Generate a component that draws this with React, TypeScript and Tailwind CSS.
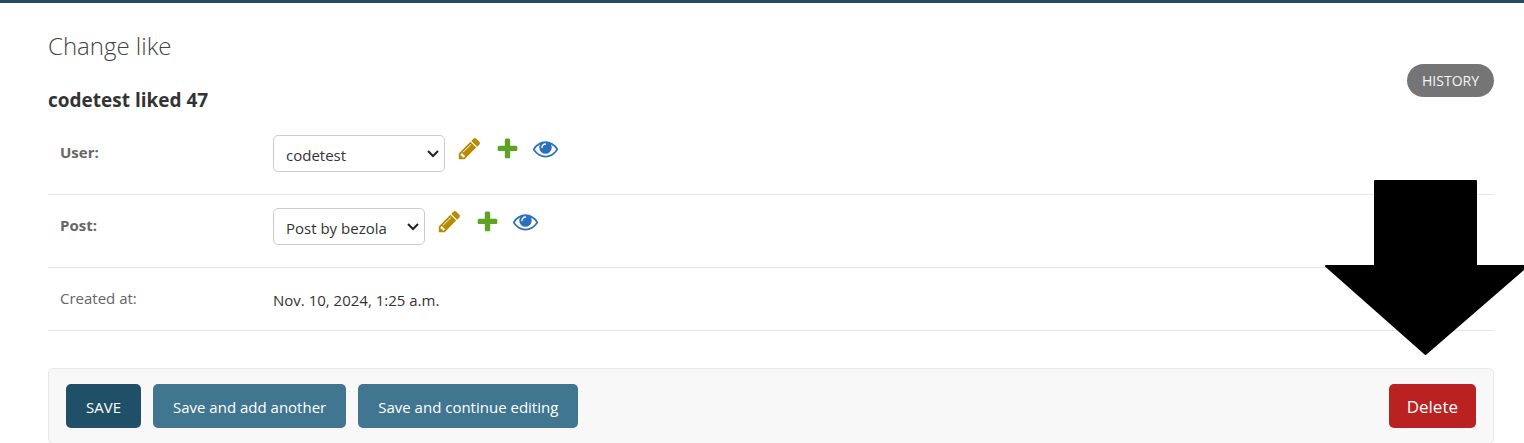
import type { ReactNode } from "react";

const PENCIL =
  "M491 1536l91-91-235-235-91 91v107h128v128h107zm523-928q0-22-22-22-10 0-17 7l-542 542q-7 7-7 17 0 22 22 22 10 0 17-7l542-542q7-7 7-17zm-54-192l416 416-832 832h-416v-416zm683 96q0 53-37 90l-166 166-416-416 166-165q36-38 90-38 53 0 91 38l235 234q37 39 37 91z";
const PLUS =
  "M1600 796v192q0 40-28 68t-68 28h-416v416q0 40-28 68t-68 28h-192q-40 0-68-28t-28-68v-416h-416q-40 0-68-28t-28-68v-192q0-40 28-68t68-28h416v-416q0-40 28-68t68-28h192q40 0 68 28t28 68v416h416q40 0 68 28t28 68z";
const EYE =
  "M1664 960q-152-236-381-353 61 104 61 225 0 185-131.5 316.5t-316.5 131.5-316.5-131.5-131.5-316.5q0-121 61-225-229 117-381 353 133 205 333.5 326.5t434.5 121.5 434.5-121.5 333.5-326.5zm-720-384q0-20-14-34t-34-14q-125 0-214.5 89.5t-89.5 214.5q0 20 14 34t34 14 34-14 14-34q0-86 61-147t147-61q20 0 34-14t14-34zm848 384q0 34-20 69-140 230-376.5 368.5t-499.5 138.5-499.5-139-376.5-368q-20-35-20-69t20-69q140-229 376.5-368t499.5-139 499.5 139 376.5 368q20 35 20 69z";

function IconLink({ label, path, color }: { label: string; path: string; color: string }) {
  return (
    <a href="#" aria-label={label} className={color}>
      <svg className="size-[25px]" viewBox="0 0 1792 1792" fill="currentColor" aria-hidden="true">
        <path d={path} />
      </svg>
    </a>
  );
}

function Row({ label, children }: { label: ReactNode; children: ReactNode }) {
  return (
    <div className="flex items-start border-b border-[#e6e6e6] px-3">
      <div className="w-[213px] shrink-0 pt-[18px] text-[15px] leading-6 text-[#666]">{label}</div>
      {children}
    </div>
  );
}

function RelatedField({ id, label, value, width }: { id: string; label: string; value: string; width: string }) {
  return (
    <Row
      label={
        <label htmlFor={id} className="font-bold">
          {label}:
        </label>
      }
    >
      <div className="flex items-start gap-3 pt-[13px] pb-[22px]">
        <div className={`relative ${width}`}>
          <select
            id={id}
            className="block h-[37px] w-full appearance-none rounded-[5px] border border-[#ccc] bg-white pt-[3px] pr-8 pl-3 text-[15px] text-[#333]"
          >
            <option>{value}</option>
          </select>
          <svg
            className="pointer-events-none absolute top-[15px] right-1.5 h-2 w-3"
            viewBox="0 0 12 8"
            fill="none"
            stroke="#222"
            strokeWidth="2"
            aria-hidden="true"
          >
            <path d="M1 1l5 5 5-5" />
          </svg>
        </div>
        <div className="flex gap-[13px] pt-px">
          <IconLink label={`Change ${label}`} path={PENCIL} color="text-[#b78b03]" />
          <IconLink label={`Add ${label}`} path={PLUS} color="text-[#5fa225]" />
          <IconLink label={`View ${label}`} path={EYE} color="text-[#2b70bf]" />
        </div>
      </div>
    </Row>
  );
}

export default function App() {
  return (
    <div className="relative overflow-hidden border-t-[3px] border-[#264b5d] bg-white font-['Open_Sans','Noto_Sans',sans-serif] text-[#333]">
      <main className="pt-[27px] pr-[30px] pl-12">
        <div className="flex items-start justify-between">
          <div>
            <h1 className="text-2xl leading-8 font-light text-[#444]">Change like</h1>
            <h2 className="mt-[26px] text-[19px] leading-6 font-bold">codetest liked 47</h2>
          </div>
          <a
            href="#"
            className="mt-[34px] flex h-[33px] items-center rounded-full bg-[#757575] px-[15px] text-sm text-[#f5f5f5]"
          >
            HISTORY
          </a>
        </div>
        <form>
          <div className="pt-2.5">
            <RelatedField id="user" label="User" value="codetest" width="w-[172px]" />
            <RelatedField id="post" label="Post" value="Post by bezola" width="w-[152px]" />
            <Row label="Created at:">
              <div className="pt-5 pb-[18px] text-[15px] leading-6">Nov. 10, 2024, 1:25 a.m.</div>
            </Row>
          </div>
          <div className="mt-[37px] flex items-center gap-3 rounded-[5px] border border-[#e8e8e8] bg-[#f8f8f8] px-[17px] py-[15px] text-[15px] text-white">
            <button type="submit" className="h-11 rounded-[5px] bg-[#205067] px-5 pt-0.5">
              SAVE
            </button>
            <button type="submit" className="h-11 rounded-[5px] bg-[#417690] px-5 pt-0.5">
              Save and add another
            </button>
            <button type="submit" className="h-11 rounded-[5px] bg-[#417690] px-5 pt-0.5">
              Save and continue editing
            </button>
            <a href="#" className="ml-auto flex h-11 items-center rounded-[5px] bg-[#ba2121] px-[18px] pt-0.5 text-[17px]">
              Delete
            </a>
          </div>
        </form>
      </main>
      <svg
        className="pointer-events-none absolute top-[177px] right-0 h-[176px] w-[200px]"
        viewBox="0 0 200 176"
        stroke="#000"
        strokeWidth="2"
        strokeLinejoin="round"
        aria-hidden="true"
      >
        <path d="M51 1H152V86H203L101.500 174L2 86H51Z" />
      </svg>
    </div>
  );
}
